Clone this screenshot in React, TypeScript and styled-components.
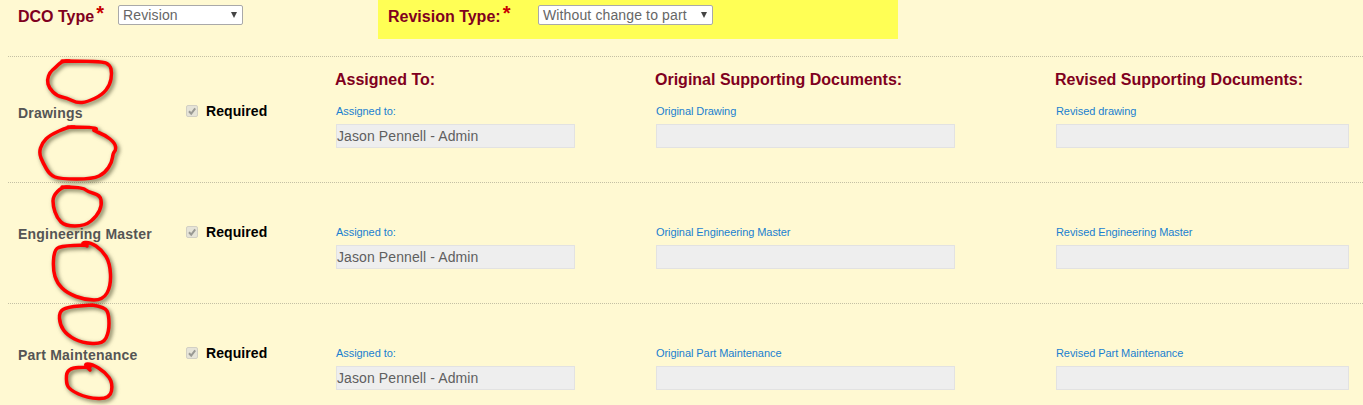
import React from 'react';
import styled, { createGlobalStyle, css } from 'styled-components';

type Section = {
  title: string;
  original: string;
  revised: string;
};

const sections: Section[] = [
  { title: 'Drawings', original: 'Original Drawing', revised: 'Revised drawing' },
  { title: 'Engineering Master', original: 'Original Engineering Master', revised: 'Revised Engineering Master' },
  { title: 'Part Maintenance', original: 'Original Part Maintenance', revised: 'Revised Part Maintenance' },
];

// the red pen marks, traced by hand from the screenshot
const scribbles = [
  '62,61 102,61 110,65 112,73 110,85 102,95 87,102 77,103 67,98 57,96 49,88 47,80 50,72 55,68 62,61 70,61',
  '68,127 95,127 97,130 92,130 105,135 115,143 116,150 113,153 112,162 105,173 93,179 60,179 50,175 43,163 39,153 42,143 50,135 68,127 75,127',
  '62,187 82,187 88,192 100,195 102,205 97,216 85,226 65,226 57,218 53,206 53,196 62,187 70,187',
  '87,246 80,243 90,242 102,250 110,263 111,286 103,300 85,300 67,293 57,283 53,270 54,251 60,246 87,245',
  '92,305 105,307 109,315 109,332 103,344 82,343 67,335 60,325 59,312 67,307 92,305',
  '90,370 83,364 92,364 105,372 113,383 110,399 87,398 70,390 66,383 67,368 90,367',
];

// rounds the traced corners off so the line reads as a pen stroke
const smoothPath = (trace: string) => {
  const pts = trace.split(' ').map((p) => p.split(',').map(Number));
  let d = `M${pts[0][0]} ${pts[0][1]}`;
  for (let i = 1; i < pts.length - 1; i++) {
    const midX = (pts[i][0] + pts[i + 1][0]) / 2;
    const midY = (pts[i][1] + pts[i + 1][1]) / 2;
    d += ` Q${pts[i][0]} ${pts[i][1]} ${midX} ${midY}`;
  }
  const last = pts[pts.length - 1];
  return `${d} L${last[0]} ${last[1]}`;
};

const GlobalStyle = createGlobalStyle`
  html, body {
    margin: 0;
    height: 405px;
    overflow: hidden;
    background: #fff9d2;
    font-family: "Liberation Sans", Arial, sans-serif;
  }
`;

const Page = styled.div`
  position: relative;
  width: 1363px;
  height: 405px;
  overflow: hidden;
  background: #fff9d2;
`;

const TopBar = styled.div`
  display: flex;
  align-items: flex-start;
  height: 56px;
  margin-left: 18px;
`;

const TypeField = styled.div`
  display: flex;
  align-items: flex-start;
  width: 360px;
  padding-top: 5px;
`;

const Highlight = styled.div`
  display: flex;
  align-items: flex-start;
  width: 520px;
  height: 39px;
  padding: 5px 0 0 10px;
  box-sizing: border-box;
  background: #ffff55;
`;

const TypeLabel = styled.label<{ $width: number }>`
  width: ${({ $width }) => $width}px;
  font-size: 16px;
  font-weight: bold;
  line-height: 23px;
  color: #7f0020;
  white-space: nowrap;
`;

const Star = styled.span`
  position: relative;
  top: -2px;
  margin-left: 2px;
  font-size: 20px;
  font-weight: bold;
  line-height: 10px;
  color: #c80000;
`;

const SelectBox = styled.div<{ $width: number }>`
  position: relative;
  width: ${({ $width }) => $width}px;
  height: 20px;
  box-sizing: border-box;
  padding-left: 4px;
  background: #fff;
  border: 1px solid #a9a9a9;
  border-radius: 2px;
  font-size: 14px;
  line-height: 18px;
  letter-spacing: 0.13px;
  color: #666;
  white-space: nowrap;

  &::after {
    content: '';
    position: absolute;
    top: 6px;
    right: 5px;
    border-style: solid;
    border-width: 6px 3.5px 0;
    border-color: #444 transparent transparent;
  }
`;

const columns = css`
  display: grid;
  grid-template-columns: 168px 150px 320px 400px 293px;
  padding-left: 10px;
`;

const Row = styled.section<{ $first?: boolean }>`
  height: ${({ $first }) => ($first ? 126 : 121)}px;
  box-sizing: border-box;
  margin-left: 8px;
  border-top: 1px dotted #c4c0a4;
  padding-top: ${({ $first }) => ($first ? 0 : 43)}px;
`;

const HeadGrid = styled.div`
  ${columns}
  height: 48px;
  align-items: start;
`;

const Head = styled.h3`
  margin: 13px 0 0 -1px;
  font-size: 16px;
  font-weight: bold;
  line-height: 20px;
  color: #7f0020;
  white-space: nowrap;
`;

const FieldGrid = styled.div`
  ${columns}
  align-items: start;
`;

const SectionTitle = styled.div`
  font-size: 14px;
  font-weight: bold;
  line-height: 16px;
  letter-spacing: 0.22px;
  color: #555;
  white-space: nowrap;
`;

const RequiredCell = styled.div`
  display: flex;
  align-items: center;
  height: 12px;
`;

const CheckBox = styled.span`
  display: flex;
  align-items: center;
  justify-content: center;
  width: 12px;
  height: 12px;
  box-sizing: border-box;
  background: #e6e4d8;
  border: 1px solid #d2d0c4;
  border-radius: 2px;
`;

const RequiredLabel = styled.span`
  margin-left: 8px;
  font-size: 14px;
  font-weight: bold;
  letter-spacing: 0.08px;
  color: #000;
`;

const Field = styled.div<{ $width: number }>`
  width: ${({ $width }) => $width}px;
`;

const FieldLabel = styled.label`
  display: block;
  height: 19px;
  font-size: 11px;
  line-height: 13px;
  letter-spacing: -0.07px;
  color: #1a7fd0;
  white-space: nowrap;
`;

const ReadOnly = styled.div`
  height: 24px;
  box-sizing: border-box;
  background: #eee;
  border: 1px solid #e2e2e2;
  font-size: 14px;
  line-height: 22px;
  letter-spacing: 0.1px;
  color: #5f5f5f;
  white-space: nowrap;
`;

const Ink = styled.svg`
  position: absolute;
  top: 0;
  left: 0;
  pointer-events: none;
  filter: drop-shadow(2px 2px 2px rgba(70, 70, 40, 0.8));
`;

const App: React.FC = () => (
  <Page>
    <GlobalStyle />
    <TopBar>
      <TypeField>
        <TypeLabel $width={100}>DCO Type<Star>*</Star></TypeLabel>
        <SelectBox $width={125}>Revision</SelectBox>
      </TypeField>
      <Highlight>
        <TypeLabel $width={150}>Revision Type:<Star>*</Star></TypeLabel>
        <SelectBox $width={175}>Without change to part</SelectBox>
      </Highlight>
    </TopBar>
    {sections.map((section, index) => (
      <Row key={section.title} $first={index === 0}>
        {index === 0 && (
          <HeadGrid>
            <span />
            <span />
            <Head>Assigned To:</Head>
            <Head>Original Supporting Documents:</Head>
            <Head>Revised Supporting Documents:</Head>
          </HeadGrid>
        )}
        <FieldGrid>
          <SectionTitle>{section.title}</SectionTitle>
          <RequiredCell>
            <CheckBox>
              <svg width="10" height="10" viewBox="0 0 10 10">
                <path d="M2 5.2 L4.2 7.6 L8.2 2.4" fill="none" stroke="#9a9a94" strokeWidth="2" />
              </svg>
            </CheckBox>
            <RequiredLabel>Required</RequiredLabel>
          </RequiredCell>
          <Field $width={239}>
            <FieldLabel>Assigned to:</FieldLabel>
            <ReadOnly>Jason Pennell - Admin</ReadOnly>
          </Field>
          <Field $width={299}>
            <FieldLabel>{section.original}</FieldLabel>
            <ReadOnly />
          </Field>
          <Field $width={293}>
            <FieldLabel>{section.revised}</FieldLabel>
            <ReadOnly />
          </Field>
        </FieldGrid>
      </Row>
    ))}
    <Ink width="130" height="405" viewBox="0 0 130 405">
      {scribbles.map((trace) => (
        <path key={trace} d={smoothPath(trace)} fill="none" stroke="#ff0000" strokeWidth="3.5" strokeLinejoin="round" strokeLinecap="round" />
      ))}
    </Ink>
  </Page>
);

export default App;
